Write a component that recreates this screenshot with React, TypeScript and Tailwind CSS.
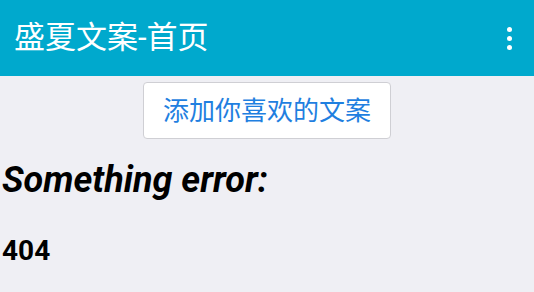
import React from "react";

const App = () => {
  return (
    <div className="w-[534px] h-[292px] bg-[#efeff4] overflow-hidden font-['Roboto','Noto_Sans_CJK_SC',sans-serif]">
      {/* top bar */}
      <header className="h-[76px] bg-[#00a9cd] flex items-center justify-between pl-[14px] pr-[22px]">
        <h1 className="text-white text-[31px] leading-none mb-[2px]">盛夏文案-首页</h1>
        <div className="flex flex-col gap-[4px]">
          <span className="w-[5px] h-[5px] rounded-full bg-white" />
          <span className="w-[5px] h-[5px] rounded-full bg-white" />
          <span className="w-[5px] h-[5px] rounded-full bg-white" />
        </div>
      </header>

      <div className="flex justify-center pt-[6px]">
        <button className="w-[248px] h-[57px] bg-white border border-[#cfcfd4] rounded-[4px] text-[#1f7fe0] text-[26px] leading-none">
          添加你喜欢的文案
        </button>
      </div>

      <h2 className="pl-[2px] mt-[23px] text-[36px] font-bold italic text-black leading-none">Something error:</h2>
      <p className="pl-[2px] mt-[39px] text-[28px] font-bold text-black leading-none">404</p>
    </div>
  );
};

export default App;
